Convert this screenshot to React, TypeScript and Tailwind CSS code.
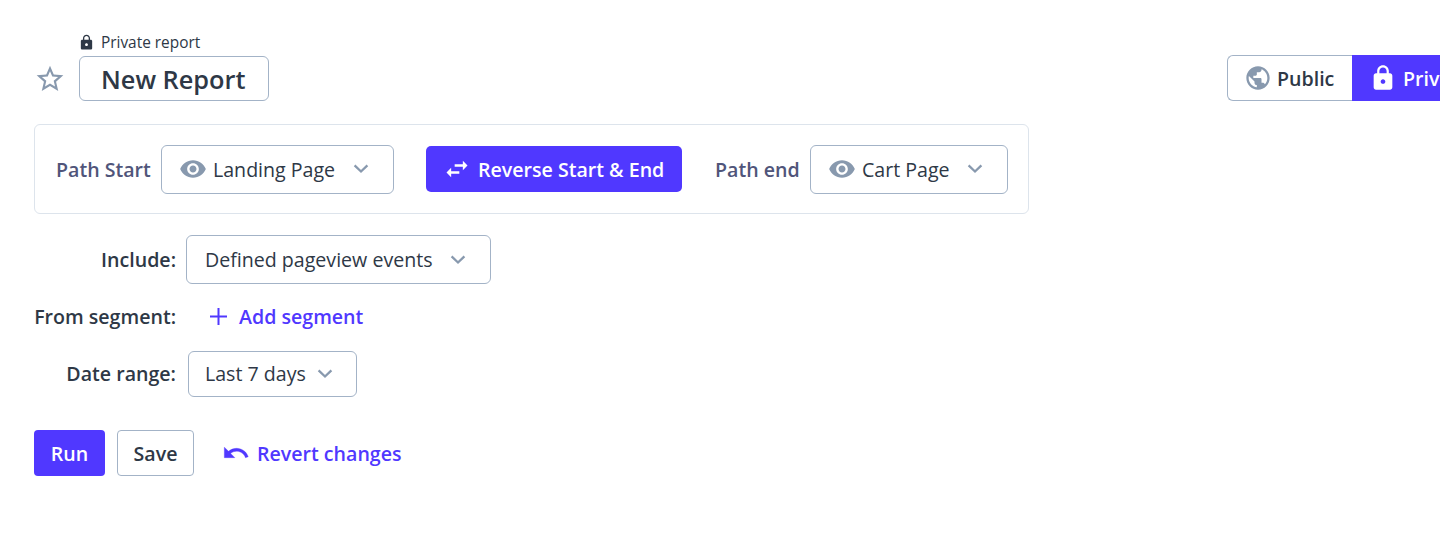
import type { ReactNode } from "react";
import { MdLock, MdPublic, MdStarBorder, MdSwapHoriz, MdVisibility } from "react-icons/md";

function Chevron({ className = "" }: { className?: string }) {
  return (
    <svg width="16" height="10" viewBox="0 0 16 10" fill="none" className={`shrink-0 text-[#8899ae] ${className}`}>
      <path d="M1.6 1.3 8 7.5l6.4-6.2" stroke="currentColor" strokeWidth="2.3" />
    </svg>
  );
}

function UndoIcon() {
  return (
    <svg width="28" height="28" viewBox="0 0 24 24" fill="currentColor" stroke="currentColor" strokeWidth="0.3">
      <path d="M12.5 8c-2.65 0-5.05.99-6.9 2.6L2 7v9h9l-3.62-3.62c1.39-1.16 3.16-1.88 5.12-1.88 3.54 0 6.55 2.31 7.6 5.5l2.37-.78C21.08 11.03 17.15 8 12.5 8z" />
    </svg>
  );
}

function PageSelect({ label, className, gap }: { label: string; className: string; gap: string }) {
  return (
    <button className={`flex h-[49px] shrink-0 items-center rounded-md border-[1.5px] border-[#a3b3c7] pl-[17px] ${className}`}>
      <MdVisibility size={28} className="shrink-0 text-[#8899ae]" />
      <span className="ml-[6px] whitespace-nowrap pt-px">{label}</span>
      <Chevron className={gap} />
    </button>
  );
}

function Row({ label, className, children }: { label: string; className: string; children: ReactNode }) {
  return (
    <div className={`flex items-center ${className}`}>
      <span className="w-[142px] shrink-0 whitespace-nowrap text-right font-semibold">{label}</span>
      {children}
    </div>
  );
}

export default function App() {
  return (
    <main className="h-[550px] w-full overflow-hidden bg-white pl-[34px] pt-[32px] font-['Open_Sans',sans-serif] text-[19.6px] leading-[28px] text-[#2e3846]">
      <header className="flex h-[70px] justify-between">
        <div>
          <div className="ml-[44px] flex h-[20px] items-center">
            <MdLock size={17} />
            <span className="ml-[6px] whitespace-nowrap pt-px text-[15.4px]">Private report</span>
          </div>
          <div className="mt-[4px] flex items-center">
            <MdStarBorder size={32} className="text-[#8899ae]" />
            <h1 className="ml-[13px] flex h-[45px] w-[190px] items-center rounded-md border-[1.5px] border-[#a3b3c7] pl-[21px] text-[25.3px] font-semibold whitespace-nowrap">
              New Report
            </h1>
          </div>
        </div>
        <div className="mt-[23px] flex h-[46px] w-[213px] shrink-0 overflow-hidden font-semibold">
          <button className="flex w-[125px] shrink-0 items-center rounded-l-md border-[1.5px] border-r-0 border-[#a3b3c7] pl-[16px]">
            <MdPublic size={28} className="text-[#8899ae]" />
            <span className="ml-[5px] pt-px">Public</span>
          </button>
          <button className="flex w-[130px] shrink-0 items-center bg-[#5038ff] pl-[17px] text-white">
            <MdLock size={28} className="shrink-0" />
            <span className="ml-[6px] pt-px">Private</span>
          </button>
        </div>
      </header>

      <section className="mt-[22px] flex h-[90px] w-[995px] items-center rounded-md border-[1.5px] border-[#dde4ec] pl-[21px]">
        <span className="w-[105px] shrink-0 whitespace-nowrap pt-px font-semibold text-[#50557a]">Path Start</span>
        <PageSelect label="Landing Page" className="w-[233px]" gap="ml-[18px]" />
        <button className="ml-[32px] flex h-[46px] w-[256px] shrink-0 items-center rounded-[5px] bg-[#5038ff] pl-[17px] font-semibold whitespace-nowrap text-white">
          <MdSwapHoriz size={28} className="shrink-0" />
          <span className="ml-[7px] pt-px">Reverse Start &amp; End</span>
        </button>
        <span className="ml-[33px] w-[95px] shrink-0 whitespace-nowrap pt-px font-semibold text-[#50557a]">Path end</span>
        <PageSelect label="Cart Page" className="w-[198px]" gap="ml-[17px]" />
      </section>

      <Row label="Include:" className="mt-[21px] h-[49px]">
        <button className="ml-[10px] flex h-[49px] w-[305px] items-center rounded-md border-[1.5px] border-[#a3b3c7] pl-[18px]">
          Defined pageview events
          <Chevron className="ml-[17px]" />
        </button>
      </Row>
      <Row label="From segment:" className="mt-[16px] h-[34px]">
        <button className="ml-[34px] flex items-center font-semibold text-[#5038ff]">
          <svg width="17" height="17" viewBox="0 0 17 17" className="mb-[2px] shrink-0">
            <path d="M8.5 0v17M0 8.5h17" stroke="currentColor" strokeWidth="2" />
          </svg>
          <span className="ml-[12px]">Add segment</span>
        </button>
      </Row>
      <Row label="Date range:" className="mt-[17px] h-[46px]">
        <button className="ml-[12px] flex h-[46px] w-[169px] items-center rounded-md border-[1.5px] border-[#a3b3c7] pl-[16px]">
          Last 7 days
          <Chevron className="ml-[11px]" />
        </button>
      </Row>

      <footer className="mt-[33px] flex h-[46px] font-semibold">
        <button className="w-[71px] rounded-[4px] bg-[#5038ff] pt-px text-white">Run</button>
        <button className="ml-[12px] w-[77px] rounded-[4px] border-[1.5px] border-[#a3b3c7] pt-px">Save</button>
        <button className="ml-[28px] flex items-center text-[#5038ff]">
          <UndoIcon />
          <span className="ml-[7px] pt-px">Revert changes</span>
        </button>
      </footer>
    </main>
  );
}
